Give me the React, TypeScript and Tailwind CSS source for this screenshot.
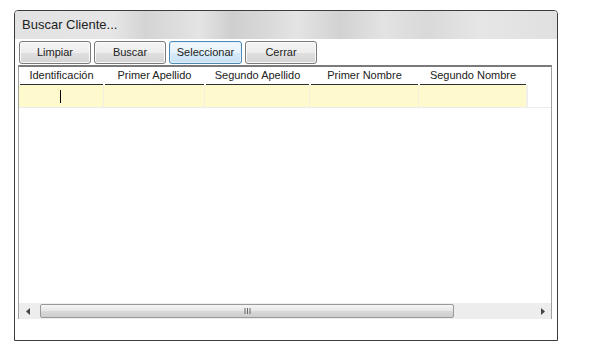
import React from "react";

const columns = [
  { label: "Identificación", w: "w-[85px]" },
  { label: "Primer Apellido", w: "w-[101px]" },
  { label: "Segundo Apellido", w: "w-[105px]" },
  { label: "Primer Nombre", w: "w-[109px]" },
  { label: "Segundo Nombre", w: "w-[108px]" },
];

const buttons = ["Limpiar", "Buscar", "Seleccionar", "Cerrar"];

export default function App() {
  return (
    <div className="w-[589px] h-[358px] bg-white font-['Liberation_Sans',Arial,sans-serif] text-[#1a1a1a] pt-[10px] pl-[14px]">
      <div className="w-[544px] h-[331px] border border-[#3c3c3c] rounded-t-[4px] flex flex-col overflow-hidden bg-white">
        {/* title bar */}
        <div className="h-[28px] shrink-0 flex items-center pl-[7px] text-[13px] text-[#222] bg-[linear-gradient(90deg,#e2e2e2_0%,#e6e6e6_18%,#d4d4d4_24%,#e4e4e4_34%,#cfcfcf_40%,#d8d8d8_46%,#e4e4e4_52%,#d2d2d2_60%,#e3e3e3_68%,#d9d9d9_76%,#e6e6e6_86%,#e0e0e0_100%)]">
          Buscar Cliente...
        </div>

        <div className="flex-1 flex flex-col pl-[3px] pr-[5px] pt-[2px] pb-[21px]">
          {/* toolbar */}
          <div className="flex gap-[3px] pl-[1px] mb-[1px]">
            {buttons.map((b) => (
              <div
                key={b}
                className={
                  b === "Seleccionar"
                    ? "w-[73px] h-[23px] flex items-center justify-center text-[11px] text-[#222] rounded-[3px] border border-[#4a88b8] bg-[linear-gradient(#f1f8fd,#e6f2fb_50%,#d6eaf8_51%,#c9e2f4)] shadow-[inset_0_0_0_1px_#e2f1fb]"
                    : "w-[72px] h-[23px] flex items-center justify-center text-[11px] text-[#222] rounded-[3px] border border-[#7a7a7a] bg-[linear-gradient(#f4f4f4,#ededed_50%,#e0e0e0_51%,#d4d4d4)] shadow-[inset_0_0_0_1px_#fbfbfb]"
                }
              >
                {b}
              </div>
            ))}
          </div>

          {/* grid */}
          <div className="flex-1 flex flex-col border-l border-r border-[#a0a0a0] border-t-2 border-t-[#7a7a7a]">
            <div className="h-[18px] flex text-[11px] text-[#222]">
              {columns.map((c) => (
                <div key={c.label} className={`${c.w} h-full px-[1px]`}>
                  <div className="h-full flex items-center justify-center border-b border-[#2e2e2e]">
                    {c.label}
                  </div>
                </div>
              ))}
              <div className="flex-1" />
            </div>
            <div className="h-[23px] flex border-b border-[#ededed]">
              {columns.map((c, i) => (
                <div
                  key={c.label}
                  className={`${c.w} h-full bg-[#fffacd] border-r border-[#f0efe0] flex items-center justify-center`}
                >
                  {i === 0 && <div className="w-px h-[13px] bg-black mr-[2px]" />}
                </div>
              ))}
              <div className="flex-1 h-full border-l border-[#eeeeee]" />
            </div>
            <div className="flex-1" />

            {/* horizontal scrollbar */}
            <div className="h-[16px] flex items-center bg-[#ededed]">
              <div className="w-[19px] h-full flex items-center justify-center">
                <svg width="5" height="7" viewBox="0 0 5 7">
                  <path d="M4 0 L0 3.5 L4 7 Z" fill="#444" />
                </svg>
              </div>
              <div className="ml-[2px] w-[414px] h-[14px] rounded-[2px] border border-[#999999] bg-[linear-gradient(#f5f5f5,#e8e8e8_45%,#d8d8d8_55%,#cdcdcd)] flex items-center justify-center">
                <svg width="7" height="6" viewBox="0 0 7 6">
                  <path d="M1 0 V6 M3.5 0 V6 M6 0 V6" stroke="#666" strokeWidth="1" />
                </svg>
              </div>
              <div className="flex-1" />
              <div className="w-[18px] h-full flex items-center justify-center">
                <svg width="5" height="7" viewBox="0 0 5 7">
                  <path d="M1 0 L5 3.5 L1 7 Z" fill="#444" />
                </svg>
              </div>
            </div>
          </div>
        </div>
      </div>
    </div>
  );
}
